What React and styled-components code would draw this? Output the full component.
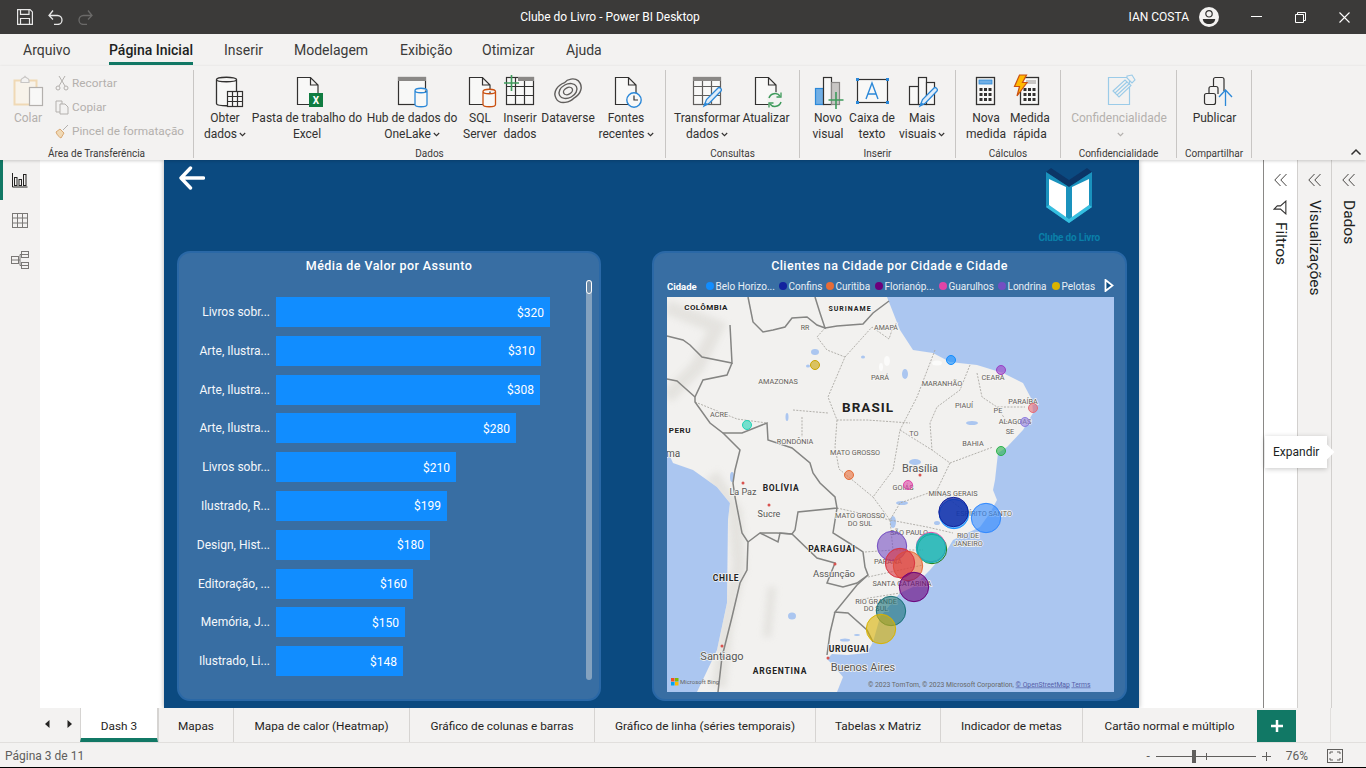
import React from "react";
import styled, { createGlobalStyle } from "styled-components";

const Global = createGlobalStyle`
  html, body { margin: 0; padding: 0; background: #fff; }
  * { box-sizing: border-box; }
`;

const UI = `"Roboto", "Open Sans", "Liberation Sans", sans-serif`;
const GREEN = "#117865";
const DARK = "#3b3a39";

const Page = styled.div`
  width: 1366px; height: 768px; overflow: hidden; display: flex; flex-direction: column;
  font-family: ${UI}; color: #323130; background: #f3f2f1; border-bottom: 1px solid #000;
`;

/* ---------- title bar ---------- */
const TitleBar = styled.header`
  height: 34px; flex: none; background: ${DARK}; color: #fff; display: flex; align-items: center;
`;
const QuickTools = styled.div`
  width: 519px; flex: none; display: flex; align-items: center; gap: 15px; padding-left: 17px;
`;
const WindowTitle = styled.div`
  font-size: 12px; white-space: nowrap; width: 182px; text-align: center;
`;
const TitleRight = styled.div`
  margin-left: auto; display: flex; align-items: center;
`;
const UserName = styled.span`
  font-size: 12px; font-weight: 400; margin-right: 10px;
`;
const WinBtn = styled.span`
  width: 44px; display: flex; justify-content: center; align-items: center;
`;

/* ---------- menu tabs ---------- */
const MenuBar = styled.nav`
  height: 32px; flex: none; display: flex; padding-left: 23px; background: #f3f2f1;
`;
const MenuItem = styled.div`
  height: 32px; width: ${p => p.$w}px; flex: none; font-size: 14px; line-height: 33px; white-space: nowrap;
  color: ${p => (p.$on ? "#201f1e" : "#3b3a39")};
  font-weight: ${p => (p.$on ? 500 : 400)};
  position: relative;
  ${p => p.$on && `&::after { content: ""; position: absolute; left: 0; width: 84px; top: 28px; height: 3px; background: ${GREEN}; }`}
`;

/* ---------- ribbon ---------- */
const Ribbon = styled.div`
  height: 94px; flex: none; display: flex; padding-top: 4px; background: #f3f2f1; position: relative; z-index: 2;
  box-shadow: 0 1px 3px rgba(0,0,0,.18);
`;
const Group = styled.section`
  width: ${p => p.$w}px; flex: none; height: 88px; border-right: 1px solid #c8c6c4; display: flex; flex-direction: column;
`;
const GroupBody = styled.div`
  flex: 1; min-height: 0; display: flex; padding-left: ${p => p.$pad || 0}px;
`;
const GroupLabel = styled.div`
  font-size: 10px; line-height: 12px; height: 10px; flex: none; text-align: center; color: #3b3a39; white-space: nowrap;
`;
const Btn = styled.div`
  width: ${p => p.$w}px; flex: none; display: flex; flex-direction: column; align-items: center;
  font-size: 12px; line-height: 16px; white-space: nowrap; text-align: center; padding-top: 4px;
  color: ${p => (p.$off ? "#b3b0ad" : "#323130")};
`;
const BtnIcon = styled.svg`
  width: 40px; height: 36px; flex: none; overflow: visible;
`;
const Chev = styled.svg`
  width: 7px; height: 5px; margin-left: 2px; vertical-align: 1px;
`;
const SmallCol = styled.div`
  display: flex; flex-direction: column; padding-top: 1px; margin-left: -1px;
`;
const SmallBtn = styled.div`
  height: 24px; display: flex; align-items: center; gap: 3px; font-size: 11.8px; color: #b3b0ad; white-space: nowrap;
`;
const Collapse = styled.svg`
  position: absolute; right: 4px; bottom: 4px; width: 12px; height: 8px;
`;

/* ---------- main ---------- */
const Main = styled.main`
  flex: none; height: 548px; display: flex; background: #fff;
`;
const Rail = styled.aside`
  width: 40px; flex: none; background: #f3f2f1; display: flex; flex-direction: column;
`;
const RailBtn = styled.div`
  height: 40px; display: flex; align-items: center; justify-content: center;
  border-left: 3px solid ${p => (p.$on ? GREEN : "transparent")}; padding-right: 3px;
`;
const Stage = styled.div`
  flex: 1; display: flex; padding-left: 124px; background: #fff;
`;
const Canvas = styled.div`
  width: 975px; height: 548px; background: #0b4a80; display: flex; flex-direction: column;
  box-shadow: 0 0 5px rgba(0,0,0,.3);
`;
const CanvasTop = styled.div`
  height: 91px; flex: none; display: flex; justify-content: space-between; padding: 6px 39px 0 15px;
`;
const Panels = styled.div`
  display: flex; padding-left: 13px; gap: 51px;
`;
const Panel = styled.section`
  width: ${p => p.$w}px; height: 450px; flex: none; position: relative; border-radius: 13px;
  background: #386ea3; border: 2px solid #2a68a6; color: #fff; font-family: "Roboto", sans-serif;
`;
const PanelTitle = styled.h2`
  margin: 0; height: 26px; padding-top: 5px; text-align: center; font-size: 12.5px; line-height: 16px; font-weight: 500; letter-spacing: .45px;
`;
const Bars = styled.div`
  display: flex; flex-direction: column; gap: 8.8px; padding-top: 18px;
`;
const BarRow = styled.div`
  display: flex; align-items: center; height: 30px;
`;
const BarLabel = styled.div`
  width: 91px; flex: none; text-align: right; font-size: 12px; white-space: nowrap; color: #f5f8fb;
`;
const Bar = styled.div`
  margin-left: 6px; height: 30px; background: #118dff; display: flex; align-items: center; justify-content: flex-end;
  padding-right: 6px; padding-top: 1px; font-size: 12px; width: ${p => p.$w}px;
`;
const Track = styled.div`
  position: absolute; left: 407px; top: 27px; width: 6px; height: 400px; background: #84a2bf; border-radius: 3px;
`;
const Thumb = styled.div`
  width: 6px; height: 14px; border-radius: 3px; background: #6d8aa6; border: 1px solid #fff;
`;
const Legend = styled.div`
  height: 18px; display: flex; align-items: center; padding-bottom: 4px; margin: 0 0 0 13px; font-size: 10px; position: relative; white-space: nowrap; color: #e8eef5;
`;
const LegendHead = styled.b`
  width: 39px; flex: none; font-weight: 700; color: #fff; font-size: 9.5px;
`;
const LegendItem = styled.span`
  width: ${p => p.$w}px; flex: none; display: flex; align-items: center; gap: 1.5px;
`;
const Dot = styled.i`
  width: 8px; height: 8px; border-radius: 50%; background: ${p => p.$c}; flex: none;
`;
const LegendNext = styled.svg`
  position: absolute; left: 437px; top: 0; width: 10px; height: 13px;
`;
const MapBox = styled.svg`
  display: block; width: 447px; height: 395px; margin-left: 13px; background: #abc6f0;
`;

/* ---------- side panes ---------- */
const Pane = styled.div`
  width: ${p => p.$w}px; flex: none; background: ${p => p.$bg}; border-left: 1px solid ${p => p.$line};
  display: flex; flex-direction: column; align-items: center; padding-top: 13px; position: relative;
`;
const PaneText = styled.div`
  writing-mode: vertical-rl; font-size: 15.5px; line-height: 16px; color: #201f1e; margin-top: ${p => p.$mt || 12}px; white-space: nowrap;
`;
const PaneIcon = styled.svg`
  margin-top: 13px; width: 15px; height: 15px; flex: none;
`;
const Tooltip = styled.div`
  position: absolute; left: 1px; top: 276px; width: 62px; height: 32px; background: #fff; font-size: 12px; line-height: 33px; padding-left: 8px;
  color: #201f1e; box-shadow: 0 1px 5px rgba(0,0,0,.22); z-index: 3;
  &::after { content: ""; position: absolute; right: -5px; top: 10px; width: 12px; height: 12px; background: #fff; transform: rotate(45deg); }
`;

/* ---------- tabs + status ---------- */
const TabBar = styled.div`
  height: 35px; flex: none; display: flex; background: #f3f2f1; border-bottom: 1px solid #e1dfdd; position: relative;
`;
const TabArrows = styled.div`
  width: 80px; flex: none; display: flex; align-items: center; justify-content: flex-end; gap: 17px; padding-right: 8px; padding-bottom: 2px;
`;
const Tab = styled.div`
  width: ${p => p.$w}px; flex: none; height: 34px; display: flex; align-items: center; justify-content: center; white-space: nowrap;
  font-size: 11.8px; color: #252423; border-left: 1px solid #d6d4d2; padding-top: 2px;
  ${p => p.$on && `background: #fff; border-bottom: 4px solid ${GREEN}; border-right: 1px solid #d6d4d2; padding-top: 6px;`}
`;
const AddTab = styled.div`
  width: 39px; height: 32px; margin: 2px 0 0 1px; background: ${GREEN}; display: flex; align-items: center; justify-content: center; flex: none;
`;
const TabEnd = styled.div`
  width: 35px; flex: none; border-right: 1px solid #e1dfdd;
`;
const StatusBar = styled.footer`
  flex: 1; min-height: 0; display: flex; align-items: center; padding: 2px 23px 0 5px; font-size: 12px; color: #605e5c; background: #f3f2f1;
`;
const Zoomer = styled.div`
  margin-left: auto; display: flex; align-items: center; color: #605e5c;
`;
const ZoomTrack = styled.div`
  width: 100px; height: 1px; background: #605e5c; margin: 0 6px; position: relative;
`;
const ZoomThumb = styled.i`
  position: absolute; left: 36px; top: -6px; width: 4px; height: 13px; background: #605e5c;
`;
const ZoomTick = styled.i`
  position: absolute; left: 50px; top: -3px; width: 1px; height: 7px; background: #605e5c;
`;
const ZoomValue = styled.span`
  margin: 0 19px 0 15px;
`;

/* ---------- drawings ---------- */
const Box = ({ children }) => <BtnIcon viewBox="-2 0 40 36" fill="none" strokeWidth="1.2">{children}</BtnIcon>;
const ChevIcon = ({ c = "#323130" }) => <Chev viewBox="0 0 7 5"><path d="M.8 1l2.7 2.7L6.2 1" fill="none" stroke={c} strokeWidth="1.1"/></Chev>;
const S = "#323130";
const Doc = ({ x = 7, c = S }) => <path d={`M${x + .5} 3.5h13l7.5 7.5v19.5h-20.5zM${x + 13.5} 3.5v7.5h7.5`} stroke={c} fill="#f8f8f7"/>;
const Grid = ({ x, y, w, h, cols, rows, c = "#605e5c" }) => {
  const out = [];
  for (let i = 1; i < cols; i++) out.push(`M${x + (w / cols) * i} ${y}v${h}`);
  for (let i = 1; i < rows; i++) out.push(`M${x} ${y + (h / rows) * i}h${w}`);
  return <><rect x={x} y={y} width={w} height={h} stroke={c} fill="#f8f8f7"/><path d={out.join("")} stroke={c}/></>;
};
const Cyl = ({ x, y, w, h, c, fill = "#f8f8f7" }) => (
  <path d={`M${x} ${y + 2}c0-3 ${w}-3 ${w} 0v${h}c0 3-${w} 3-${w} 0zM${x} ${y + 2}c0 3 ${w} 3 ${w} 0`} stroke={c} fill={fill} strokeWidth="1.3"/>
);
const Pen = ({ x = 0, y = 0, c = "#2b88d8" }) => (
  <g transform={`translate(${x} ${y})`}>
    <path d="M3 20l2.5-6.5L17 2c1.5-1.5 4.5 1.5 3 3L8.5 17z" fill="#deecf9" stroke={c} strokeWidth="1.3"/>
    <path d="M3 20l1.2-4 2.8 2.6z" fill={c}/>
  </g>
);

const IcoObter = () => <Box><Cyl x={9.5} y={3.5} w={20} h={24} c={S}/><Grid x={20.5} y={17.5} w={15} h={15} cols={3} rows={3} c={S}/></Box>;
const IcoExcel = () => <Box><Doc x={8}/><rect x={20} y={19} width={14} height={14} fill="#107c41"/><text x={27} y={30} fontSize="10" fontWeight="700" fill="#fff" textAnchor="middle" fontFamily="Roboto">X</text></Box>;
const IcoHub = () => <Box><rect x={4.5} y={3.5} width={27} height={27} stroke={S} fill="#f8f8f7"/><rect x={4} y={3} width={28} height={4} fill="#8a8886"/><Cyl x={21} y={14.5} w={12} h={14} c="#2b88d8"/></Box>;
const IcoSql = () => <Box><Doc x={7}/><Cyl x={21} y={15.5} w={12.5} h={13} c="#ca5010"/></Box>;
const IcoInsert = () => <Box><Grid x={4.5} y={3.5} w={27} h={27} cols={3} rows={3} c={S}/><rect x={16} y={3} width={16} height={4} fill="#8a8886"/><path d="M9.5 1v16M2 9h15" stroke="#3e9a5b" strokeWidth="1.6"/></Box>;
const IcoDataverse = () => (
  <Box>
    <g stroke="#605e5c" strokeWidth="1.4" transform="rotate(-28 18 17)">
      <path d="M4 18c0-8 8-11 15-10 4-2 11 0 13 5 2 7-4 13-12 13-5 2-16 0-16-8z"/>
      <ellipse cx="18" cy="17" rx="9.500" ry="6.800"/>
      <ellipse cx="18" cy="17" rx="4.800" ry="3.300"/>
    </g>
  </Box>
);
const IcoClock = () => <Box><Doc x={7}/><circle cx={26} cy={26} r={7.2} stroke="#2b88d8" fill="#f8f8f7" strokeWidth="1.4"/><path d="M26 21.5V26h4" stroke={S}/></Box>;
const IcoTransform = () => <Box><Grid x={4.5} y={3.5} w={27} h={27} cols={3} rows={3} c="#605e5c"/><rect x={4} y={3} width={28} height={4} fill="#8a8886"/><Pen x={12} y={12}/></Box>;
const IcoRefresh = () => (
  <Box><Doc x={7}/><circle cx={27} cy={26} r={8} fill="#f3f2f1"/>
    <path d="M21 24a6.3 6.3 0 0 1 11-2M33 28a6.3 6.3 0 0 1-11 2" stroke="#3e9a5b" strokeWidth="1.5"/>
    <path d="M33 18.5v4.5h-4.5M21 33.5v-4.5h4.5" stroke="#3e9a5b" strokeWidth="1.3"/></Box>
);
const IcoNewVisual = () => (
  <Box><rect x={5.5} y={14.5} width={8} height={16} fill="#71afe5" stroke="#2b88d8"/><rect x={13.5} y={3.5} width={8} height={27} fill="#f8f8f7" stroke={S}/><rect x={21.5} y={8.5} width={8} height={22} fill="#c8c6c4" stroke="#8a8886"/><path d="M26 18v17M18.500 26h15" stroke="#3e9a5b" strokeWidth="1.6"/></Box>
);
const IcoText = () => (
  <Box>
    <rect x={3.5} y={5.5} width={30} height={23} stroke={S} fill="#f8f8f7"/>
    {[[3.500, 5.5], [33.5, 5.5], [3.500, 28.5], [33.5, 28.5]].map(([x, y]) => <rect key={x + "-" + y} x={x - 1.5} y={y - 1.5} width={3} height={3} fill="#2b88d8"/>)}
    <path d="M12 25L18 9l6 16M14 20h8" stroke="#2b88d8" strokeWidth="1.4"/>
  </Box>
);
const IcoMore = () => <Box><rect x={5.5} y={12.5} width={9} height={18} stroke={S} fill="#f8f8f7"/><rect x={14.5} y={3.5} width={8} height={27} stroke={S} fill="#f8f8f7"/><rect x={22.5} y={8.5} width={8} height={22} stroke={S} fill="#f8f8f7"/><Pen x={13} y={12}/></Box>;
const Calc = ({ x }) => (
  <g>
    <rect x={x + .5} y={3.5} width={18} height={27} stroke={S} fill="#f8f8f7" strokeWidth="1.3"/>
    {[13, 18, 23].flatMap(y => [3.5, 8, 12.5].map(dx => <rect key={y + "-" + dx} x={x + dx} y={y + 1} width={3} height={3} fill={S}/>))}
  </g>
);
const IcoCalc = () => <Box><Calc x={8}/><rect x={11} y={6} width={13} height={4} fill="#71afe5" stroke="#2b88d8" strokeWidth=".8"/></Box>;
const IcoQuick = () => <Box><Calc x={8}/><rect x={14} y={6} width={10} height={4} fill="#c8c6c4"/><path d="M7.500 1h7l-4 7.500h4.500L5 22l2.500-9.500H2.500z" fill="#ffb900" stroke="#ca5010"/></Box>;
const IcoConf = () => <Box><path d="M7.500 3.500h21v27h-21z" fill="#f3f2f1" stroke="#9bcbe8"/><g stroke="#9bcbe8" fill="#f3f2f1" strokeWidth="1.1"><path d="M12 17L24 6l6 5.500L18 23z"/><path d="M14 19L26 8M16 21L28 10"/><path d="M26 2l5-1 3 5-3 3-5-5z"/></g></Box>;
const IcoPublish = () => (
  <Box>
    <path d="M16.500 12V5.500a2 2 0 0 1 2-2H25a2 2 0 0 1 2 2V17" stroke={S}/>
    <path d="M12 19.500v-5a2 2 0 0 1 2-2h5a2 2 0 0 1 2 2V20" stroke={S}/>
    <rect x={7.500} y={19.5} width={11} height={11} rx={2} stroke={S}/>
    <path d="M28.500 32V16M22 23l6.500-7 6.500 7" stroke="#2b88d8" strokeWidth="1.3"/>
  </Box>
);
const IcoPaste = () => (
  <BtnIcon viewBox="-2 0 40 36" fill="none" strokeWidth="1.2">
    <path d="M4.500 6.500h22v24h-22z" stroke="#f0d9b5" fill="#f8f3ea" strokeWidth="2"/>
    <path d="M11 6.500c0-3 3-2 4-4 1 2 4 1 4 4v2h-8z" stroke="#c8c6c4" fill="#f3f2f1"/>
    <rect x={19.500} y={13.5} width={13} height={18} stroke="#b3b0ad" fill="#f8f8f7"/>
  </BtnIcon>
);
const Small = ({ children }) => <svg width="14" height="16" viewBox="0 0 14 16" fill="none" stroke="#b3b0ad" strokeWidth="1">{children}</svg>;

const Save = () => <svg width="16" height="16" viewBox="0 0 16 16" fill="none" stroke="#e8e8e8" strokeWidth="1.200"><path d="M.6.6h12.500l2.300 2.300v12.500H.6z"/><path d="M3.500.6v4.800h8.500V.6M3.500 15.400V9.500h9v5.900"/></svg>;
const Undo = ({ c }) => <svg width="15" height="16" viewBox="0 0 15 16" fill="none" stroke={c} strokeWidth="1.300"><path d="M1 6.500h8.500a4.500 4.500 0 0 1 0 9H6M5 1.500l-4 5 4 4"/></svg>;
const Redo = ({ c }) => <svg width="15" height="16" viewBox="0 0 15 16" fill="none" stroke={c} strokeWidth="1.300"><path d="M14 6.500H5.500a4.500 4.500 0 0 0 0 9H9M10 1.500l4 5-4 4"/></svg>;

const AvatarIcon = styled.svg`
  margin-right: 15px;
`;
const Avatar = () => (
  <AvatarIcon width="20" height="20" viewBox="0 0 20 20">
    <circle cx="10" cy="10" r="10" fill="#f3f2f1"/>
    <circle cx="10" cy="6.800" r="3.200" fill="none" stroke="#323130" strokeWidth="1.200"/>
    <path d="M3.800 12h12.400c0 3-2.800 5-6.200 5s-6.200-2-6.200-5z" fill="#323130"/>
  </AvatarIcon>
);

const RailChart = () => <svg width="16" height="16" viewBox="0 0 16 16" fill="none" stroke="#252423" strokeWidth="1"><path d="M.5 1v14h15"/><rect x="2.500" y="5.500" width="2.500" height="8"/><rect x="7" y="7.500" width="2.500" height="6"/><rect x="11.500" y="2.500" width="2.500" height="11"/></svg>;
const RailTable = () => <svg width="16" height="15" viewBox="0 0 16 15" fill="none" stroke="#7a7876" strokeWidth="1"><rect x=".5" y=".5" width="15" height="14"/><path d="M.5 5h15M.5 10h15M5.500 .5v14M10.500 .5v14"/></svg>;
const RailModel = () => <svg width="18" height="18" viewBox="0 0 18 18" fill="none" stroke="#7a7876" strokeWidth="1"><rect x="10.500" y=".5" width="7" height="6"/><rect x="10.500" y="11.500" width="7" height="6"/><rect x=".5" y="5.500" width="7" height="7"/><path d="M.5 9h7M10.500 3.500H9v11h1.500M7.500 9H9M10.500 14.500h7M10.500 3.500h7"/></svg>;

const Back = () => <svg width="26" height="24" viewBox="0 0 26 24" fill="none" stroke="#fff" strokeWidth="3.400" strokeLinecap="round" strokeLinejoin="round"><path d="M24.500 12H2.500M11.500 2L2 12l9.500 10"/></svg>;

const LogoWrap = styled.div`
  display: flex; flex-direction: column; align-items: center; gap: 8px; margin-top: 3px;
`;
const LogoText = styled.span`
  font-size: 10px; font-weight: 700; color: #0a7fa8; font-family: "Roboto", sans-serif; white-space: nowrap; letter-spacing: -.2px; line-height: 14px;
`;
const LogoMark = styled.svg`
  overflow: visible; display: block;
`;
const Logo = () => (
  <LogoWrap>
    <LogoMark width="48" height="54" viewBox="0 0 48 54">
      <path d="M6 -1L24 11L42 -1L47 3L24 18L1 3z" fill="#0c3566"/>
      <path d="M1 3L24 18L47 3V38L24 54L1 38z" fill="#1a92bd"/>
      <path d="M1 38L24 54L47 38L44 36L24 50L4 36z" fill="#35bfe0"/>
      <path d="M4 10L21 18V48L4 36z" fill="#fff"/><path d="M44 10L27 18V48L44 36z" fill="#fff"/>
    </LogoMark>
    <LogoText>Clube do Livro</LogoText>
  </LogoWrap>
);

/* ---------- map data (map-local coordinates) ---------- */
const LAND = "M0 0L220 0L233 33L246 53L266 56L283 65L310 68L336 76L356 86L365 103L366 116L356 133L340 150L331 156L328 183L326 193L330 203L323 216L313 230L286 243L280 253L263 273L246 290L233 296L213 320L206 345L200 356L180 358L165 357L160 362L166 368L176 380L170 395L30 395L50 353L60 306L61 223L63 206L50 190L26 173L6 166L0 153Z";
const BORDERS = [
  "M81 0L86 25L96 35L106 33L118 30L125 21L140 20L150 28L158 31L153 16L148 0",
  "M158 31L170 29L196 27L206 16L222 4",
  "M63 28L65 66L35 60L23 48L16 43L0 39",
  "M65 66L60 78L36 83L28 100L28 105L43 126L56 136L75 136L100 126L101 143L125 151L143 166L146 176L153 186L168 200L170 211L131 215L128 233L125 237L110 236L93 236L81 245",
  "M56 136L73 153L68 173L66 186L68 200L75 236L81 245L80 273L73 286L65 320L55 360L51 395",
  "M93 236L111 245L113 236L125 237L150 261L168 266L160 286L176 290L190 286L201 278L198 270L196 255L190 251L166 236L170 211",
  "M201 278L190 288L168 315L181 316L200 333L206 345",
  "M168 315L163 336L160 358",
  "M0 82L10 84L28 100",
];
const DASH = [
  "M158 31L150 40L160 53L178 60L161 100L170 123L200 123L243 126",
  "M178 60L205 30L222 42L226 30",
  "M268 53L250 100L233 133L226 173L206 200L223 223",
  "M303 68L293 93L270 110L263 126L265 153L283 166L326 150",
  "M310 76L315 100L330 110L358 110",
  "M330 110L340 125L350 127",
  "M135 120L135 140M126 113L161 116",
  "M28 105L70 122L100 126",
  "M170 123L168 150L172 172L206 200",
  "M233 133L265 153",
  "M270 193L233 206L223 223L260 230L286 236",
  "M283 166L270 193L300 216L323 216",
  "M223 223L226 253L256 253",
  "M198 255L226 253",
  "M201 280L256 268",
  "M190 303L233 296",
  "M170 211L223 223",
];
const LAKES = [
  [148, 55, 4, 3], [141, 69, 2, 1.5], [196, 60, 2, 1.5], [238, 77, 3, 5], [120, 120, 1.5, 4], [305, 126, 6, 2], [248, 165, 6, 3],
  [125, 319, 4, 3.500], [235, 206, 6, 2], [226, 225, 3, 6], [270, 226, 3, 2], [65, 180, 2, 5], [178, 343, 5, 1.500], [190, 338, 3, 1],
];
const LIGHTS = [[220, 64, 3, 5], [270, 66, 5, 2.500], [214, 70, 2, 4]];
const LABELS = [
  ["COLÔMBIA", 39, 10, 8, 700, "#222", .4], ["SURINAME", 183, 11, 7, 700, "#222", 1], ["RR", 138, 30, 7], ["AMAPÁ", 219, 30, 7],
  ["AMAZONAS", 111, 84, 7.300], ["PARÁ", 213, 80, 7.300], ["MARANHÃO", 275, 86, 7.300], ["CEARÁ", 326, 80, 7.300], ["PIAUÍ", 297, 108, 7.300],
  ["PARAÍBA", 356, 104, 7.300], ["PE", 331, 113, 7.300], ["ALAGOAS", 348, 124, 7.300], ["SE", 343, 134, 7.300], ["BRASIL", 201, 110, 13.500, 700, "#222", 1],
  ["ACRE", 52, 117, 7.300], ["PERU", 13, 133, 8, 700, "#222", .6], ["TO", 247, 136, 7.300], ["BAHIA", 306, 146, 7.300], ["RONDÔNIA", 128, 144, 7.300],
  ["MATO GROSSO", 188, 155, 7.300], ["Brasília", 253, 171, 11, 400, "#555"], ["ma", 6, 156, 10, 400, "#555"],
  ["BOLÍVIA", 114, 191, 8.500, 700, "#222", .6], ["La Paz", 76, 195, 9, 400, "#555"], ["GOIÁS", 236, 190, 7.300], ["MINAS GERAIS", 286, 196, 7.300],
  ["Sucre", 102, 217, 9, 400, "#555"], ["MATO GROSSO", 193, 218, 7.300], ["DO SUL", 193, 226, 7.300], ["ESPÍRITO SANTO", 317, 216, 7.300],
  ["SÃO PAULO", 242, 235, 7.300], ["RIO DE", 301, 238, 7.300], ["JANEIRO", 301, 246, 7.300], ["PARAGUAI", 165, 252, 8.500, 700, "#222", .8],
  ["PARANÁ", 221, 264, 7.300], ["Assunção", 167, 277, 9.500, 400, "#555"], ["CHILE", 59, 281, 8.500, 700, "#222", .6], ["SANTA CATARINA", 235, 286, 7.300],
  ["RIO GRANDE", 209, 304, 7.300], ["DO SUL", 209, 311, 7.300], ["URUGUAI", 182, 352, 8.500, 700, "#222", .6], ["Santiago", 55, 359, 11, 400, "#555"],
  ["ARGENTINA", 113, 374, 8.500, 700, "#222", .8], ["Buenos Aires", 196, 370, 11, 400, "#555"],
];
const CITIES = [[76, 186], [102, 208], [55, 349], [161, 361], [168, 267], [253, 178]];
const OX = 667, OY = 297;
const BUBBLES = [
  [1033, 408, 4.5, "#e66c77"], [1025, 422, 4.5, "#8f7de0"], [815, 365, 4.5, "#c9a400"], [951, 360, 4.5, "#118dff"], [1001, 370, 4.5, "#9b3fc4"],
  [747, 425, 4.5, "#1fd3b5"], [1001, 451, 4.5, "#2ab34c"], [849, 475, 4.5, "#e66c37"], [908, 485, 4.5, "#e044a7"],
  [954, 514, 14.700, "#118dff"], [953.5, 512, 14.700, "#12239e", .75], [986, 518, 14.700, "#2f88ff"],
  [892, 546, 14.700, "#744ec2"], [932, 549, 14.700, "#107c10", 0], [931, 547, 14.700, "#e044a7", 0], [931, 548, 14.700, "#16b3b3", .85],
  [908, 566, 14.700, "#e66c37"], [900, 563, 14.700, "#d9323f"], [914, 587, 14.700, "#6b007b"], [891, 611, 14.700, "#197278"], [881, 629, 14.700, "#d9b300"],
];

const MapView = () => (
  <MapBox viewBox="0 0 447 395" fontFamily={'"Roboto", sans-serif'}>
    <defs><filter id="soft"><feGaussianBlur stdDeviation=".35"/></filter><filter id="soft2"><feGaussianBlur stdDeviation="3"/></filter><clipPath id="land"><path d={LAND}/></clipPath></defs>
    <path d={LAND} fill="#f2f1ef" filter="url(#soft)"/>
    <g clipPath="url(#land)" filter="url(#soft2)" fill="none" stroke="#dcdad5" opacity=".6">
      <path d="M45 178L68 215L72 270L60 320L52 390" strokeWidth="14"/>
      <path d="M0 10L50 30L30 70L0 100" strokeWidth="14"/>
      <path d="M105 290L100 340" strokeWidth="8"/>
    </g>
    <g filter="url(#soft)">
      {LIGHTS.map(([x, y, a, b]) => <ellipse key={x} cx={x} cy={y} rx={a} ry={b} fill="#fbfbfa"/>)}
      {LAKES.map(([x, y, a, b]) => <ellipse key={x} cx={x} cy={y} rx={a} ry={b} fill="#abc6f0"/>)}
    </g>
    <g filter="url(#soft)" fill="none">
      {DASH.map(d => <path key={d} d={d} stroke="#aaa8a3" strokeWidth=".9" strokeDasharray="2 1.300"/>)}
      {BORDERS.map(d => <path key={d} d={d} stroke="#858583" strokeWidth="1.500"/>)}
    </g>
    {CITIES.map(([x, y]) => <circle key={x} cx={x} cy={y} r="1.500" fill="#d9534f"/>)}
    {LABELS.map(([t, x, y, s, w = 400, c = "#635d58", ls = 0]) => (
      <text key={t + x} x={x} y={y + s * .36} fontSize={s} fontWeight={w} fill={c} letterSpacing={ls} textAnchor="middle" stroke="#f6f5f3" strokeWidth="1.400" paintOrder="stroke">{t}</text>
    ))}
    {BUBBLES.map(([x, y, r, c, o = .6]) => (
      <circle key={x + "-" + y} cx={x - OX} cy={y - OY} r={r} fill={c} fillOpacity={o} stroke={c} strokeWidth="1"/>
    ))}
    <g><rect x="4" y="381" width="3.500" height="3.500" fill="#f25022"/><rect x="8" y="381" width="3.500" height="3.500" fill="#7fba00"/><rect x="4" y="385" width="3.500" height="3.500" fill="#00a4ef"/><rect x="8" y="385" width="3.500" height="3.500" fill="#ffb900"/></g>
    <text x="13" y="387" fontSize="6" fill="#666">Microsoft Bing</text>
    <text x="201" y="389.500" fontSize="6.800" fill="#666">© 2023 TomTom, © 2023 Microsoft Corporation, <tspan textDecoration="underline" fill="#5560a8">© OpenStreetMap</tspan>  <tspan textDecoration="underline" fill="#5560a8">Terms</tspan></text>
  </MapBox>
);

const BARS = [
  ["Livros sobr...", "$320", 274], ["Arte, Ilustra...", "$310", 265], ["Arte, Ilustra...", "$308", 264], ["Arte, Ilustra...", "$280", 240],
  ["Livros sobr...", "$210", 180], ["Ilustrado, R...", "$199", 171], ["Design, Hist...", "$180", 154], ["Editoração, ...", "$160", 137],
  ["Memória, J...", "$150", 129], ["Ilustrado, Li...", "$148", 127],
];
const LEGEND = [
  ["Belo Horizo...", "#118dff", 73], ["Confins", "#12239e", 47], ["Curitiba", "#e66c37", 49], ["Florianóp...", "#6b007b", 64],
  ["Guarulhos", "#e044a7", 59], ["Londrina", "#744ec2", 54], ["Pelotas", "#d9b300", 45],
];
const TABS = [
  ["Mapas", 75], ["Mapa de calor (Heatmap)", 176], ["Gráfico de colunas e barras", 185], ["Gráfico de linha (séries temporais)", 221],
  ["Tabelas x Matriz", 125], ["Indicador de metas", 142], ["Cartão normal e múltiplo", 174],
];
const Caret = ({ dir }) => <svg width="5" height="8" viewBox="0 0 5 8"><path d={dir === "l" ? "M4.500 0v8L0 4z" : "M.5 0v8L5 4z"} fill="#252423"/></svg>;
const DoubleChev = () => <svg width="14" height="14" viewBox="0 0 14 14" fill="none" stroke="#484644" strokeWidth="1"><path d="M6.500 1L.8 7l5.700 6M12.500 1L6.800 7l5.700 6"/></svg>;

export default function App() {
  return (
    <Page>
      <Global/>
      <TitleBar>
        <QuickTools><Save/><Undo c="#e8e8e8"/><Redo c="#6b6a69"/></QuickTools>
        <WindowTitle>Clube do Livro - Power BI Desktop</WindowTitle>
        <TitleRight>
          <UserName>IAN COSTA</UserName>
          <Avatar/>
          <WinBtn><svg width="11" height="2"><rect width="11" height="1" fill="#fff"/></svg></WinBtn>
          <WinBtn><svg width="11" height="11" fill="none" stroke="#fff"><path d="M.5 2.500h8v8h-8zM2.500 2.500V.5h8v8H8.500"/></svg></WinBtn>
          <WinBtn><svg width="11" height="11" stroke="#fff" strokeWidth="1.100"><path d="M.5 .5l10 10M10.500 .5l-10 10"/></svg></WinBtn>
        </TitleRight>
      </TitleBar>

      <MenuBar>
        {[["Arquivo", 86], ["Página Inicial", 115, true], ["Inserir", 70], ["Modelagem", 106], ["Exibição", 82], ["Otimizar", 84], ["Ajuda", 40]].map(([t, w, on]) => (
          <MenuItem key={t} $w={w} $on={on}>{t}</MenuItem>
        ))}
      </MenuBar>

      <Ribbon>
        <Group $w={194}>
          <GroupBody>
            <Btn $w={56} $off><IcoPaste/>Colar</Btn>
            <SmallCol>
              <SmallBtn><Small><path d="M4 1l6 10M10 1L4 11"/><circle cx="3" cy="13" r="2"/><circle cx="11" cy="13" r="2"/></Small>Recortar</SmallBtn>
              <SmallBtn><Small><path d="M1 2h6v11H1z"/><path d="M5 5h5l3 3v7H5z" fill="#f3f2f1"/></Small>Copiar</SmallBtn>
              <SmallBtn><Small><path d="M13 2L8 7"/><path d="M1 9l4-3 4 4-3 5c-2-1-4-3-5-6z" stroke="#d9a873" fill="#f0d9b5"/></Small>Pincel de formatação</SmallBtn>
            </SmallCol>
          </GroupBody>
          <GroupLabel>Área de Transferência</GroupLabel>
        </Group>
        <Group $w={472}>
          <GroupBody $pad={6}>
            <Btn $w={50}><IcoObter/>Obter<span>dados<ChevIcon/></span></Btn>
            <Btn $w={114}><IcoExcel/>Pasta de trabalho do<span>Excel</span></Btn>
            <Btn $w={96}><IcoHub/>Hub de dados do<span>OneLake<ChevIcon/></span></Btn>
            <Btn $w={40}><IcoSql/>SQL<span>Server</span></Btn>
            <Btn $w={40}><IcoInsert/>Inserir<span>dados</span></Btn>
            <Btn $w={56}><IcoDataverse/>Dataverse</Btn>
            <Btn $w={60}><IcoClock/>Fontes<span>recentes<ChevIcon/></span></Btn>
          </GroupBody>
          <GroupLabel>Dados</GroupLabel>
        </Group>
        <Group $w={134}>
          <GroupBody $pad={10}>
            <Btn $w={62}><IcoTransform/>Transformar<span>dados<ChevIcon/></span></Btn>
            <Btn $w={56}><IcoRefresh/>Atualizar</Btn>
          </GroupBody>
          <GroupLabel>Consultas</GroupLabel>
        </Group>
        <Group $w={156}>
          <GroupBody $pad={8}>
            <Btn $w={40}><IcoNewVisual/>Novo<span>visual</span></Btn>
            <Btn $w={48}><IcoText/>Caixa de<span>texto</span></Btn>
            <Btn $w={52}><IcoMore/>Mais<span>visuais<ChevIcon/></span></Btn>
          </GroupBody>
          <GroupLabel>Inserir</GroupLabel>
        </Group>
        <Group $w={105}>
          <GroupBody $pad={10}>
            <Btn $w={40}><IcoCalc/>Nova<span>medida</span></Btn>
            <Btn $w={48}><IcoQuick/>Medida<span>rápida</span></Btn>
          </GroupBody>
          <GroupLabel>Cálculos</GroupLabel>
        </Group>
        <Group $w={116}>
          <GroupBody>
            <Btn $w={116} $off><IcoConf/>Confidencialidade<span><ChevIcon c="#b3b0ad"/></span></Btn>
          </GroupBody>
          <GroupLabel>Confidencialidade</GroupLabel>
        </Group>
        <Group $w={75}>
          <GroupBody>
            <Btn $w={75}><IcoPublish/>Publicar</Btn>
          </GroupBody>
          <GroupLabel>Compartilhar</GroupLabel>
        </Group>
        <Collapse viewBox="0 0 12 8"><path d="M1.500 6.500L6 2l4.500 4.500" fill="none" stroke="#323130" strokeWidth="1.500"/></Collapse>
      </Ribbon>

      <Main>
        <Rail>
          <RailBtn $on><RailChart/></RailBtn>
          <RailBtn><RailTable/></RailBtn>
          <RailBtn><RailModel/></RailBtn>
        </Rail>
        <Stage>
          <Canvas>
            <CanvasTop>
              <Back/>
              <Logo/>
            </CanvasTop>
            <Panels>
              <Panel $w={424}>
                <PanelTitle>Média de Valor por Assunto</PanelTitle>
                <Bars>
                  {BARS.map(([l, v, w], i) => (
                    <BarRow key={i}><BarLabel>{l}</BarLabel><Bar $w={w}>{v}</Bar></BarRow>
                  ))}
                </Bars>
                <Track><Thumb/></Track>
              </Panel>
              <Panel $w={475}>
                <PanelTitle>Clientes na Cidade por Cidade e Cidade</PanelTitle>
                <Legend>
                  <LegendHead>Cidade</LegendHead>
                  {LEGEND.map(([t, c, w]) => <LegendItem key={t} $w={w}><Dot $c={c}/>{t}</LegendItem>)}
                  <LegendNext viewBox="0 0 10 13"><path d="M1.500 1L8.500 6.500 1.500 12z" fill="#0b4a80" stroke="#fff" strokeWidth="1.800"/></LegendNext>
                </Legend>
                <MapView/>
              </Panel>
            </Panels>
          </Canvas>
        </Stage>
        <Pane $w={34} $bg="#fff" $line="#8a8886">
          <DoubleChev/>
          <PaneIcon viewBox="0 0 14 14" fill="none" stroke="#323130"><path d="M1 2h12L8.500 7v6L5.500 10V7z" transform="rotate(90 7 7)"/></PaneIcon>
          <PaneText $mt={7}>Filtros</PaneText>
          <Tooltip>Expandir</Tooltip>
        </Pane>
        <Pane $w={34} $bg="#f3f2f1" $line="#d2d0ce">
          <DoubleChev/>
          <PaneText $mt={13}>Visualizações</PaneText>
        </Pane>
        <Pane $w={35} $bg="#f3f2f1" $line="#d2d0ce">
          <DoubleChev/>
          <PaneText $mt={13}>Dados</PaneText>
        </Pane>
      </Main>

      <TabBar>
        <TabArrows><Caret dir="l"/><Caret dir="r"/></TabArrows>
        <Tab $w={78} $on>Dash 3</Tab>
        {TABS.map(([t, w]) => <Tab key={t} $w={w}>{t}</Tab>)}
        <AddTab><svg width="12" height="12"><path d="M6 0v12M0 6h12" stroke="#fff" strokeWidth="2.500"/></svg></AddTab>
        <TabEnd/>
      </TabBar>
      <StatusBar>
        Página 3 de 11
        <Zoomer>
          -
          <ZoomTrack><ZoomThumb/><ZoomTick/></ZoomTrack>
          <svg width="9" height="9" stroke="#605e5c"><path d="M4.500 0v9M0 4.500h9"/></svg>
          <ZoomValue>76%</ZoomValue>
          <svg width="16" height="14" fill="none" stroke="#605e5c"><rect x=".5" y=".5" width="15" height="13"/><path d="M3 5V3h3M13 5V3h-3M3 9v2h3M13 9v2h-3"/></svg>
        </Zoomer>
      </StatusBar>
    </Page>
  );
}
